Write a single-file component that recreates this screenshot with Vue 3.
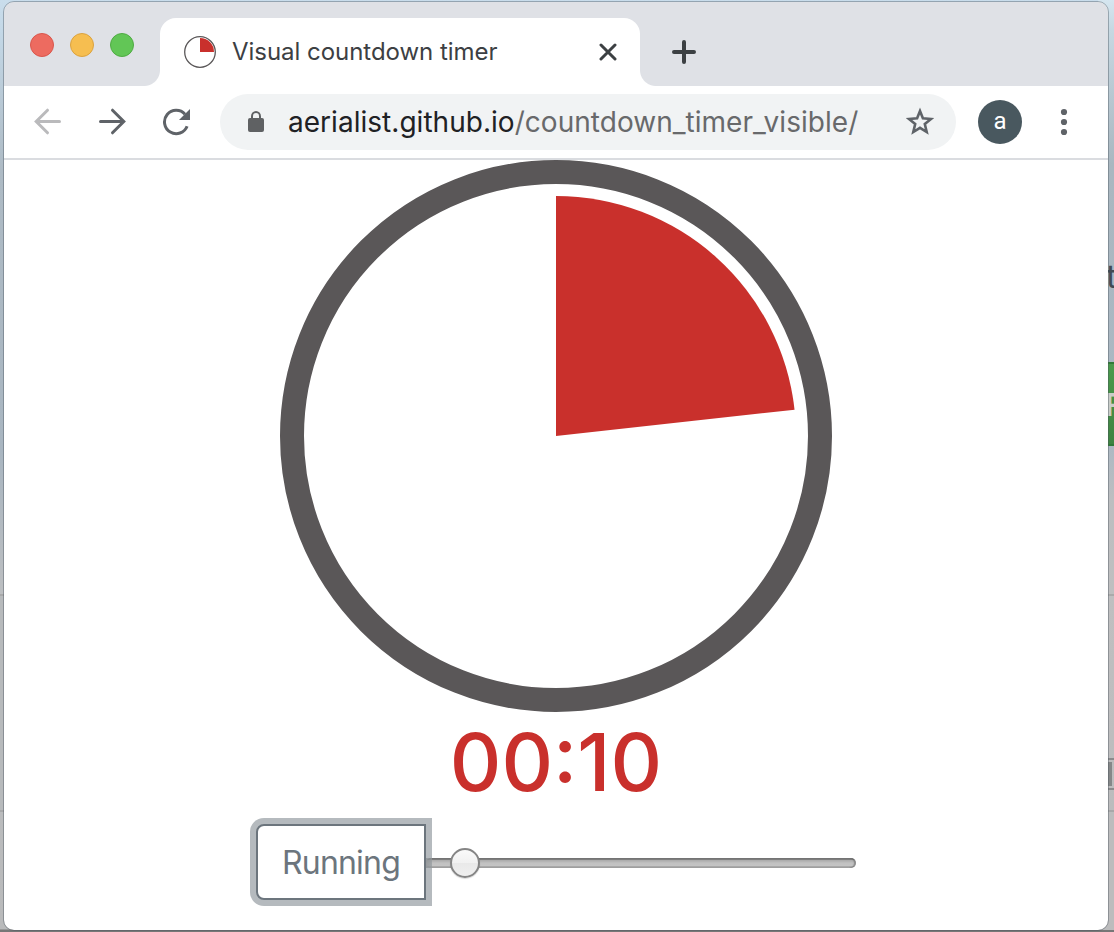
<script setup>
import { computed, ref } from 'vue'

const remaining = ref(10)
const fraction = ref(0.2325)
const label = computed(() => {
  const m = String(Math.floor(remaining.value / 60)).padStart(2, '0')
  const s = String(remaining.value % 60).padStart(2, '0')
  return `${m}:${s}`
})
const wedge = computed(() => {
  const a = fraction.value * 2 * Math.PI
  const x = (276 + 240 * Math.sin(a)).toFixed(2)
  const y = (276 - 240 * Math.cos(a)).toFixed(2)
  return `M276 276V36A240 240 0 ${fraction.value > 0.5 ? 1 : 0} 1 ${x} ${y}Z`
})
</script>

<template>
  <div class="desktop">
    <div class="behind-left"></div>
    <div class="behind-right">
      <span class="peek-t">t</span>
      <span class="peek-button">F</span>
      <span class="peek-box"><i></i></span>
    </div>
    <div class="window">
      <header class="tabstrip">
        <div class="lights">
          <span class="light red"></span>
          <span class="light yellow"></span>
          <span class="light green"></span>
        </div>
        <div class="tab">
          <svg class="favicon" width="32" height="32" viewBox="0 0 32 32">
            <circle cx="16" cy="16" r="15.3" fill="#fff" stroke="#5a5758" stroke-width="1.3" />
            <path d="M16 16V2A14 14 0 0 1 30 16Z" fill="#c9302c" />
          </svg>
          <span class="title">Visual countdown timer</span>
          <svg class="close" width="18" height="18" viewBox="0 0 18 18">
            <path d="M2 2L16 16M16 2L2 16" stroke="#3c4043" stroke-width="3" stroke-linecap="round" />
          </svg>
        </div>
        <svg class="plus" width="24" height="24" viewBox="0 0 24 24">
          <path d="M12 2V22M2 12H22" stroke="#3c4043" stroke-width="4" stroke-linecap="round" />
        </svg>
      </header>

      <nav class="toolbar">
        <svg class="nav-icon back" width="28" height="28" viewBox="0 0 28 28">
          <path d="M25.5 13.5H3M13.5 2.2L2.2 13.5L13.5 24.8" />
        </svg>
        <svg class="nav-icon forward" width="28" height="28" viewBox="0 0 28 28">
          <path d="M2.5 13.5H25M14.5 2.2L25.8 13.5L14.5 24.8" />
        </svg>
        <svg class="nav-icon reload" width="28" height="28" viewBox="0 0 28 28">
          <path d="M25.1 18.2A11.7 11.7 0 1 1 23 6.2" />
          <path class="solid" d="M28 1V12H17Z" />
        </svg>
        <div class="omnibox">
          <svg class="lock" width="16" height="22" viewBox="0 0 16 22">
            <path d="M4 8V5.2A4 4.2 0 0 1 12 5.2V8" fill="none" stroke="#5f6163" stroke-width="2" />
            <rect x="0" y="7" width="16" height="14" rx="2" fill="#5f6163" />
          </svg>
          <span class="url"><span class="host">aerialist.github.io</span><span class="path">/countdown_timer_visible/</span></span>
          <svg class="star" width="30" height="30" viewBox="0 0 30 30">
            <path d="M15 4.1L17.9 11.3L26 12L19.8 17.1L21.7 25L15 20.8L8.3 25L10.2 17.1L4 12L12.1 11.3Z" fill="none" stroke="#5f6368" stroke-width="2.6" />
          </svg>
        </div>
        <div class="avatar">a</div>
        <svg class="menu" width="8" height="28" viewBox="0 0 8 28">
          <circle cx="4" cy="4" r="3.1" /><circle cx="4" cy="14" r="3.1" /><circle cx="4" cy="24" r="3.1" />
        </svg>
      </nav>

      <main class="page">
        <svg class="dial" width="552" height="552" viewBox="0 0 552 552">
          <circle cx="276" cy="276" r="264" fill="#fff" stroke="#5a5758" stroke-width="24" />
          <path :d="wedge" fill="#c9302c" />
        </svg>
        <div class="time">{{ label }}</div>
        <div class="controls">
          <button class="run"><span>Running</span></button>
          <div class="slider"><span class="thumb"></span></div>
        </div>
      </main>
    </div>
  </div>
</template>

<style>
html, body { margin: 0; overflow: hidden; }
</style>

<style scoped>
* { box-sizing: border-box; }
.desktop {
  position: relative;
  width: 1114px;
  height: 932px;
  padding: 2px 6px 2px 4px;
  overflow: hidden;
  font-family: Inter, "Liberation Sans", sans-serif;
  background: linear-gradient(#c9ddec 0, #c4d8e7 30px, #aebbc5 170px, #a9b6c1 450px, #bdbfc1 600px, #b9babb 929px, #777 930px);
}
.behind-left {
  position: absolute;
  left: 0; top: 594px;
  width: 5px; height: 218px;
  border: solid #a8a9aa;
  border-width: 2px 0;
  background: #b7babc;
}
.behind-right {
  position: absolute;
  left: 1098px; top: 0;
  width: 16px; height: 930px;
  overflow: hidden;
  background: linear-gradient(#d5e6f0 0, #c6d8e2 30px, #a9b7c0 165px, #abb8c3 440px, #bcbec0 500px, #bfbfc0 594px, #aaa 594px, #aaa 596px, #bfbfc0 596px, #bcbcbd 810px, #a8a8a9 810px, #a8a8a9 812px, #bcbcbd 812px);
}
.peek-t {
  position: absolute;
  left: 8px; top: 256px;
  font-size: 33px;
  line-height: 40px;
  color: #414b54;
}
.peek-button {
  position: absolute;
  left: 10px; top: 362px;
  width: 40px; height: 84px;
  border: solid #327a38;
  border-width: 2px 0;
  background: linear-gradient(#4b9a4c, #3f8342);
  color: #c9cdc9;
  font-size: 31px;
  font-weight: 600;
  line-height: 81px;
  text-indent: -3px;
}
.peek-box {
  position: absolute;
  left: 10px; top: 758px;
  width: 12px; height: 32px;
  padding: 2px 0;
  border: solid #8b8b8c;
  border-width: 2px 0;
}
.peek-box i { display: block; width: 4px; height: 24px; background: #858788; }
.window {
  position: relative;
  width: 1104px;
  height: 928px;
  overflow: hidden;
  display: flex;
  flex-direction: column;
  border-radius: 10px;
  background: #fff;
}
.desktop::after {
  content: "";
  position: absolute;
  box-sizing: border-box;
  left: 3px; top: 1px;
  width: 1106px; height: 930px;
  border: 1px solid rgba(70, 80, 90, .4);
  border-radius: 11px;
}
.tabstrip {
  display: flex;
  flex: none;
  height: 84px;
  background: #dfe1e6;
}
.lights { display: flex; gap: 16px; padding: 31px 0 0 26px; width: 156px; }
.light { width: 24px; height: 24px; border-radius: 50%; border: 1px solid; }
.red { background: #ed6b60; border-color: #d9564c; }
.yellow { background: #f6be50; border-color: #dba23f; }
.green { background: #62c656; border-color: #4fab43; }
.tab {
  position: relative;
  display: flex;
  align-items: center;
  width: 480px;
  height: 68px;
  margin-top: 16px;
  padding: 0 23px 0 24px;
  border-radius: 16px 16px 0 0;
  background: #fff;
}
.tab::before, .tab::after {
  content: "";
  position: absolute;
  bottom: 0;
  width: 16px; height: 16px;
}
.tab::before { left: -16px; background: radial-gradient(circle at 0 0, transparent 15.5px, #fff 16.5px); }
.tab::after { right: -16px; background: radial-gradient(circle at 100% 0, transparent 15.5px, #fff 16.5px); }
.title { margin: -2px 0 0 16px; font-size: 24px; letter-spacing: -.04px; color: #3c4043; white-space: nowrap; }
.close { margin-left: auto; }
.plus { margin: 38px 0 0 32px; }
.toolbar {
  display: flex;
  align-items: center;
  flex: none;
  height: 74px;
  padding: 0 0 0 30px;
  border-bottom: 2px solid #dadce0;
}
.nav-icon { flex: none; fill: none; stroke: #5f6368; stroke-width: 3; stroke-linecap: round; }
.back { stroke: #bababc; }
.forward { margin-left: 36px; }
.reload { margin-left: 36px; stroke-linecap: butt; }
.solid { fill: #5f6368; stroke: none; }
.omnibox {
  display: flex;
  align-items: center;
  flex: none;
  width: 736px;
  height: 56px;
  margin-left: 30px;
  padding: 0 21px 0 28px;
  border-radius: 28px;
  background: #f1f3f4;
}
.url { margin-left: 24px; font-size: 28px; letter-spacing: .03px; line-height: 40px; white-space: nowrap; }
.host { color: #202124; }
.path { color: #68696b; }
.star { margin-left: auto; }
.avatar {
  flex: none;
  width: 44px; height: 44px;
  margin-left: 22px;
  border-radius: 50%;
  background: #49585f;
  color: #fff;
  font: 400 24px/42px Roboto, sans-serif;
  text-align: center;
}
.menu { margin-left: 38px; fill: #5f6368; }
.page { display: flex; flex-direction: column; align-items: center; }
.dial { display: block; flex: none; }
.time {
  height: 96px;
  font-size: 80px;
  font-weight: 500;
  line-height: 100px;
  color: #c9302c;
  white-space: nowrap;
}
.controls { display: flex; align-items: center; width: 600px; height: 76px; margin-top: 16px; }
.run {
  width: 170px; height: 76px;
  flex: none;
  padding: 0;
  border: 2px solid #6c757d;
  border-radius: 8px 0 0 8px;
  box-shadow: 0 0 0 6px #b5babe;
  background: #fff;
  color: #6c757d;
  font: 400 32px/74px Inter, sans-serif;
  letter-spacing: -.8px;
  white-space: nowrap;
}
.slider {
  position: relative;
  display: flex;
  align-items: center;
  width: 430px; height: 10px;
  margin-top: 2px;
  padding-left: 24px;
  border-radius: 5px;
  background: linear-gradient(#737373 0, #808080 20%, #adadad 25%, #c1c1c1 50%, #c4c4c4 75%, #a8a8a8 85%, #a2a2a2);
  box-shadow: inset -2px 0 1px rgba(90, 90, 90, .5);
}
.slider::before {
  content: "";
  position: absolute;
  left: 0; top: 0;
  width: 6px; height: 10px;
  background: linear-gradient(90deg, #858a8e, #949a9e);
  opacity: .7;
}
.thumb {
  flex: none;
  width: 30px; height: 30px;
  border: 2px solid #858585;
  border-radius: 50%;
  background: linear-gradient(#fafafa 0, #f1f1f1 50%, #e9e9e9 51%, #efefef 100%);
  box-shadow: 0 1px 1px rgba(0, 0, 0, .15);
}
</style>
